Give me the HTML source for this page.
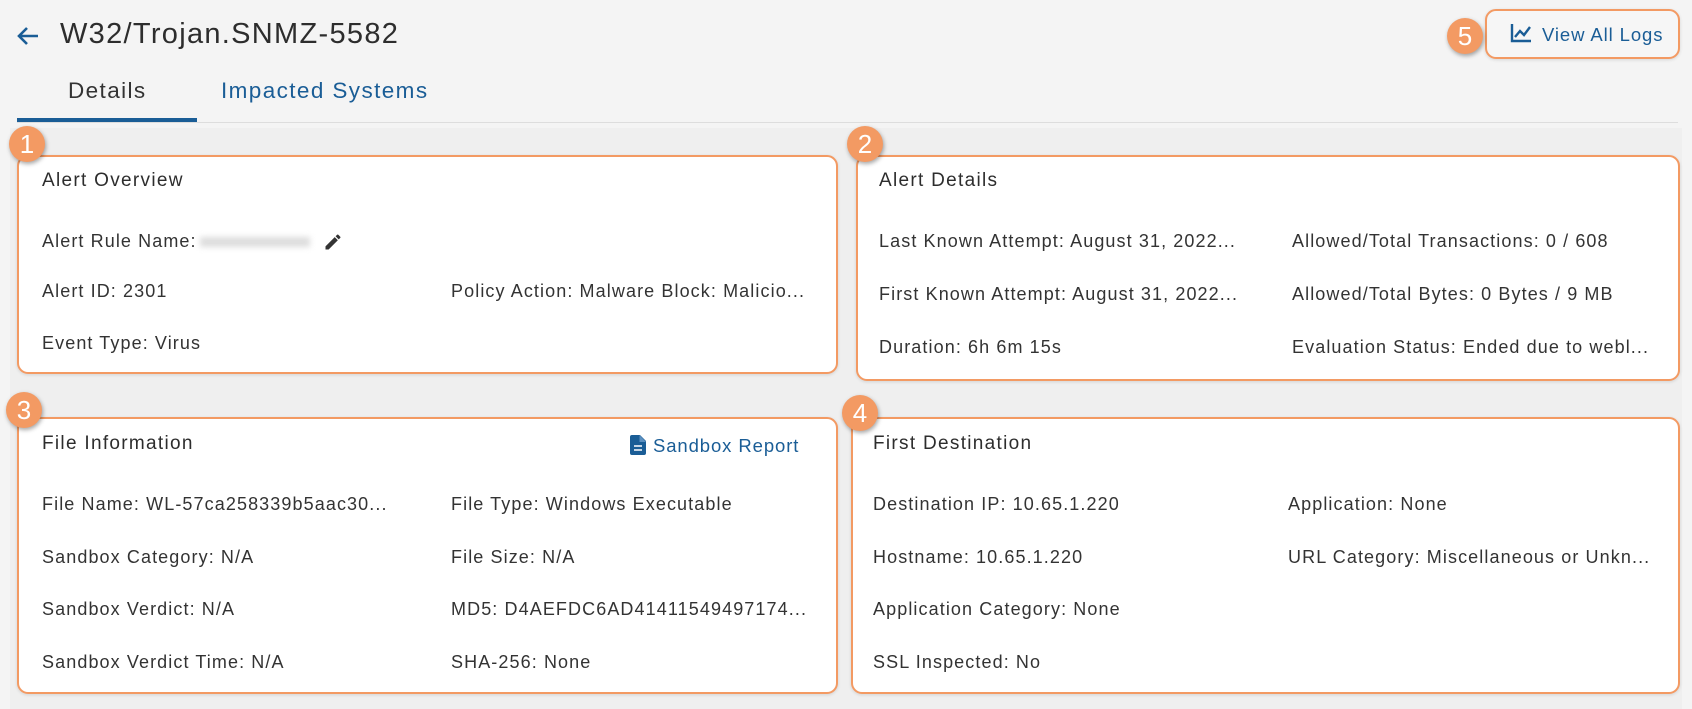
<!DOCTYPE html>
<html><head><meta charset="utf-8"><style>
*{margin:0;padding:0;box-sizing:border-box}
body{width:1692px;height:709px;background:#f4f4f4;font-family:"Liberation Sans",Arial,sans-serif;color:#333;position:relative;overflow:hidden}
.abs{position:absolute}
.title{left:60px;top:18px;font-size:29px;color:#2d2d2d;white-space:nowrap;letter-spacing:1.3px}
.tab{top:78px;font-size:22.5px;white-space:nowrap;letter-spacing:1.4px}
.box{position:absolute;background:#fff;border:2.5px solid #f39a63;border-radius:11px;box-shadow:0 1px 3px rgba(0,0,0,.12)}
.h{position:absolute;font-size:19px;color:#2d2d2d;white-space:nowrap;letter-spacing:1.3px}
.t{position:absolute;font-size:18px;color:#333;white-space:nowrap;letter-spacing:1.1px}
.badge{position:absolute;width:36px;height:36px;border-radius:50%;background:#f39a63;color:#fff;font-size:26px;text-align:center;line-height:36px;box-shadow:1px 2px 4px rgba(0,0,0,.35)}
.blue{color:#1a5d96}
</style></head><body>
<svg class="abs" style="left:16px;top:26px" width="24" height="20" viewBox="0 0 24 20"><path d="M22 10H4M11 2L3 10l8 8" fill="none" stroke="#1a5d96" stroke-width="2.6"/></svg>
<div class="abs title">W32/Trojan.SNMZ-5582</div>
<div class="abs tab" style="left:68px">Details</div>
<div class="abs tab blue" style="left:221px">Impacted Systems</div>
<div class="abs" style="left:17px;top:122px;width:1661px;height:1px;background:#ddd"></div>
<div class="abs" style="left:17px;top:118px;width:180px;height:4px;background:#1a5d96"></div>
<div class="abs" style="left:10px;top:128px;width:1672px;height:581px;background:#efefef"></div>

<div class="box" style="left:1485px;top:9px;width:195px;height:50px;background:#f6f6f6"></div>
<svg class="abs" style="left:1510px;top:23px" width="22" height="20" viewBox="0 0 22 20"><path d="M2 1v17h19M5 14l5-6 4 4 6-8" fill="none" stroke="#1a5d96" stroke-width="2.4"/></svg>
<div class="abs blue" style="left:1542px;top:24px;font-size:18.5px;letter-spacing:0.9px">View All Logs</div>
<div class="badge" style="left:1447px;top:18px">5</div>

<div class="box" style="left:17px;top:155px;width:821px;height:219px"></div>
<div class="box" style="left:856px;top:155px;width:824px;height:226px"></div>
<div class="box" style="left:17px;top:417px;width:821px;height:277px"></div>
<div class="box" style="left:851px;top:417px;width:829px;height:277px"></div>

<div class="h" style="left:42px;top:170px">Alert Overview</div>
<div class="t" style="left:42px;top:231px">Alert Rule Name:</div>
<div class="abs" style="left:200px;top:237px;width:110px;height:10px;background:#ddd;filter:blur(3px)"></div>
<svg class="abs" style="left:323px;top:232px" width="20" height="20" viewBox="0 0 24 24"><path d="M3 17.25V21h3.75L17.81 9.94l-3.75-3.75L3 17.25zM20.71 7.04a1 1 0 000-1.41l-2.34-2.34a1 1 0 00-1.41 0l-1.83 1.83 3.75 3.75 1.83-1.830z" fill="#333"/></svg>
<div class="t" style="left:42px;top:281px">Alert ID: 2301</div>
<div class="t" style="left:451px;top:281px">Policy Action: Malware Block: Malicio...</div>
<div class="t" style="left:42px;top:333px">Event Type: Virus</div>

<div class="h" style="left:879px;top:170px">Alert Details</div>
<div class="t" style="left:879px;top:231px">Last Known Attempt: August 31, 2022...</div>
<div class="t" style="left:1292px;top:231px">Allowed/Total Transactions: 0 / 608</div>
<div class="t" style="left:879px;top:284px">First Known Attempt: August 31, 2022...</div>
<div class="t" style="left:1292px;top:284px">Allowed/Total Bytes: 0 Bytes / 9 MB</div>
<div class="t" style="left:879px;top:337px">Duration: 6h 6m 15s</div>
<div class="t" style="left:1292px;top:337px">Evaluation Status: Ended due to webl...</div>

<div class="h" style="left:42px;top:433px">File Information</div>
<svg class="abs" style="left:630px;top:435px" width="16" height="20" viewBox="0 0 16 20"><path d="M2 0h8l6 6v12a2 2 0 01-2 2H2a2 2 0 01-2-2V2a2 2 0 012-2z" fill="#1a5d96"/><path d="M4 11h8M4 15h8" stroke="#fff" stroke-width="1.6"/><path d="M9.5 0v7h6.5" fill="#5a8fc0"/></svg>
<div class="abs blue" style="left:653px;top:435px;font-size:18.5px;letter-spacing:0.9px">Sandbox Report</div>
<div class="t" style="left:42px;top:494px">File Name: WL-57ca258339b5aac30...</div>
<div class="t" style="left:451px;top:494px">File Type: Windows Executable</div>
<div class="t" style="left:42px;top:547px">Sandbox Category: N/A</div>
<div class="t" style="left:451px;top:547px">File Size: N/A</div>
<div class="t" style="left:42px;top:599px">Sandbox Verdict: N/A</div>
<div class="t" style="left:451px;top:599px">MD5: D4AEFDC6AD41411549497174...</div>
<div class="t" style="left:42px;top:652px">Sandbox Verdict Time: N/A</div>
<div class="t" style="left:451px;top:652px">SHA-256: None</div>

<div class="h" style="left:873px;top:433px">First Destination</div>
<div class="t" style="left:873px;top:494px">Destination IP: 10.65.1.220</div>
<div class="t" style="left:1288px;top:494px">Application: None</div>
<div class="t" style="left:873px;top:547px">Hostname: 10.65.1.220</div>
<div class="t" style="left:1288px;top:547px">URL Category: Miscellaneous or Unkn...</div>
<div class="t" style="left:873px;top:599px">Application Category: None</div>
<div class="t" style="left:873px;top:652px">SSL Inspected: No</div>

<div class="badge" style="left:9px;top:126px">1</div>
<div class="badge" style="left:847px;top:126px">2</div>
<div class="badge" style="left:6px;top:392px">3</div>
<div class="badge" style="left:842px;top:395px">4</div>
</body></html>
